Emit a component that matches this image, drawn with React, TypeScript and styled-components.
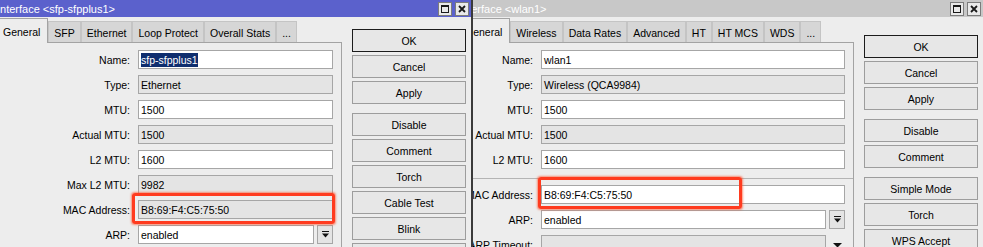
import React from 'react';
import styled, { createGlobalStyle } from 'styled-components';

const GlobalStyle = createGlobalStyle`
  html, body {
    margin: 0;
    padding: 0;
    background: #ededed;
    overflow: hidden;
  }
  body {
    font-family: "Liberation Sans", Arial, sans-serif;
    font-size: 10.5px;
    color: #000;
  }
`;

const Screen = styled.div`
  display: flex;
  width: 983px;
  height: 247px;
  overflow: hidden;
  background: #ededed;
`;

const Clip = styled.div<{ $width: number }>`
  width: ${p => p.$width}px;
  height: 100%;
  flex-shrink: 0;
  overflow: hidden;
`;

const Frame = styled.div<{ $cut: number; $edge?: boolean }>`
  position: relative;
  height: 100%;
  margin-left: -${p => p.$cut}px;
  background: #ededed;
  border-right: ${p => (p.$edge ? '2px solid #3a3a3a' : 'none')};
`;

const TitleBar = styled.div<{ $active?: boolean }>`
  height: 17px;
  display: flex;
  align-items: center;
  padding: 0 2px 0 3px;
  background: ${p => (p.$active ? '#5b61cc' : '#c8c8c8')};
  color: #fff;
  font-size: 11px;
`;

const TitleText = styled.div`
  flex: 1;
  white-space: nowrap;
  overflow: hidden;
`;

const TitleButtons = styled.div`
  display: flex;
  gap: 3px;
`;

const TitleButton = styled.div`
  width: 14px;
  height: 14px;
  box-sizing: border-box;
  border: 1px solid #7c7c7c;
  background: #e9e9e9;
  display: flex;
  align-items: center;
  justify-content: center;
`;

const Body = styled.div`
  display: flex;
  align-items: flex-start;
  padding: 0 5px 0 1px;
`;

const TabArea = styled.div<{ $width: number }>`
  width: ${p => p.$width}px;
  flex-shrink: 0;
  display: flex;
  flex-direction: column;
`;

const TabRow = styled.div`
  height: 26px;
  margin-bottom: -1px;
  display: flex;
  align-items: flex-end;
  position: relative;
  z-index: 1;
`;

const Tab = styled.div<{ $active?: boolean }>`
  box-sizing: border-box;
  height: ${p => (p.$active ? 25 : 21)}px;
  margin-bottom: ${p => (p.$active ? 0 : 1)}px;
  padding: ${p => (p.$active ? '2px 7px 0' : '1px 5px 0')};
  border: 1px solid ${p => (p.$active ? '#a3a3a3' : '#c4c4c4')};
  border-bottom: none;
  background: ${p => (p.$active ? '#ededed' : '#d6d6d6')};
  display: flex;
  align-items: center;
  white-space: nowrap;
`;

const Panel = styled.div`
  height: 220px;
  border: 1px solid #a3a3a3;
  padding: 7px 8px 0 0;
`;

const Form = styled.div`
  display: flex;
  flex-direction: column;
  gap: 6px;
`;

const Row = styled.div<{ $labelWidth: number }>`
  display: grid;
  grid-template-columns: ${p => p.$labelWidth}px 1fr;
  column-gap: 8px;
  align-items: center;
  height: 19px;
`;

const Label = styled.div`
  text-align: right;
  white-space: nowrap;
`;

const Field = styled.div<{ $readOnly?: boolean }>`
  flex: 1;
  min-width: 0;
  box-sizing: border-box;
  height: 19px;
  border: 1px solid #a6a6a6;
  background: ${p => (p.$readOnly ? '#e4e4e4' : '#fff')};
  padding: 0 2px;
  display: flex;
  align-items: center;
  white-space: nowrap;
  overflow: hidden;
`;

const Selected = styled.span`
  background: #0e2d6e;
  color: #fff;
  padding: 1px 0;
`;

const Combo = styled.div`
  display: flex;
  gap: 3px;
`;

const DropButton = styled.div<{ $plain?: boolean }>`
  width: 16px;
  height: 19px;
  flex-shrink: 0;
  box-sizing: border-box;
  border: 1px solid ${p => (p.$plain ? 'transparent' : '#a6a6a6')};
  background: ${p => (p.$plain ? 'transparent' : '#e4e4e4')};
  display: flex;
  align-items: center;
  justify-content: center;
`;

const Separator = styled.div`
  height: 1px;
  margin: 3px -8px 0 0;
  background: #b4b4b4;
`;

const ButtonColumn = styled.div<{ $top: number }>`
  width: 114px;
  flex-shrink: 0;
  margin-left: 10px;
  padding-top: ${p => p.$top}px;
  display: flex;
  flex-direction: column;
  gap: 9px;
`;

const ButtonGroup = styled.div`
  display: flex;
  flex-direction: column;
  gap: 3px;
`;

const Button = styled.div<{ $default?: boolean }>`
  height: 23px;
  box-sizing: border-box;
  border: 1px solid ${p => (p.$default ? '#1c1c1c' : '#9d9d9d')};
  background: #e7e7e7;
  display: flex;
  align-items: center;
  justify-content: center;
  white-space: nowrap;
`;

const Highlight = styled.div`
  position: absolute;
  box-sizing: border-box;
  border: 3px solid #ff3b1f;
  border-radius: 3px;
  box-shadow: 0 0 2px 0.5px rgba(255, 80, 40, 0.6);
  pointer-events: none;
`;

type FieldRow = {
  label: string;
  value?: string;
  readOnly?: boolean;
  selected?: boolean;
  combo?: 'box' | 'plain';
};
type FormRow = FieldRow | { separator: true };

interface WindowProps {
  title: string;
  active?: boolean;
  cut: number;
  width: number;
  edge?: boolean;
  tabs: string[];
  tabAreaWidth: number;
  labelWidth: number;
  rows: FormRow[];
  buttonTop: number;
  buttons: string[][];
  highlight: { left: number; top: number; width: number; height: number };
}

const MaxIcon = () => (
  <svg width="8" height="8" viewBox="0 0 8 8">
    <rect x="0.5" y="0.5" width="7" height="7" fill="none" stroke="#1a1a1a" />
    <rect x="0" y="0" width="8" height="2" fill="#1a1a1a" />
  </svg>
);

const CloseIcon = () => (
  <svg width="8" height="8" viewBox="0 0 8 8">
    <path d="M1 1 L7 7 M7 1 L1 7" stroke="#1a1a1a" strokeWidth="1.8" />
  </svg>
);

const DropIcon = ({ bar }: { bar: boolean }) => (
  <svg width="9" height="7" viewBox="0 0 9 7">
    {bar && <rect x="1" y="0" width="7" height="1" fill="#111" />}
    <polygon points={bar ? '1,2.5 8,2.5 4.5,6.5' : '0,2 9,2 4.5,6.5'} fill="#111" />
  </svg>
);

const InterfaceWindow: React.FC<WindowProps> = props => (
  <Clip $width={props.width}>
    <Frame $cut={props.cut} $edge={props.edge}>
      <TitleBar $active={props.active}>
        <TitleText>{props.title}</TitleText>
        <TitleButtons>
          <TitleButton>
            <MaxIcon />
          </TitleButton>
          <TitleButton>
            <CloseIcon />
          </TitleButton>
        </TitleButtons>
      </TitleBar>
      <Body>
        <TabArea $width={props.tabAreaWidth}>
          <TabRow>
            {props.tabs.map((t, i) => (
              <Tab key={t} $active={i === 0}>
                {t}
              </Tab>
            ))}
          </TabRow>
          <Panel>
            <Form>
              {props.rows.map((r, i) =>
                'separator' in r ? (
                  <Separator key={i} />
                ) : (
                  <Row key={r.label} $labelWidth={props.labelWidth}>
                    <Label>{r.label}:</Label>
                    {r.combo ? (
                      <Combo>
                        <Field $readOnly={r.readOnly}>{r.value}</Field>
                        <DropButton $plain={r.combo === 'plain'}>
                          <DropIcon bar={r.combo === 'box'} />
                        </DropButton>
                      </Combo>
                    ) : (
                      <Field $readOnly={r.readOnly}>
                        {r.selected ? <Selected>{r.value}</Selected> : r.value}
                      </Field>
                    )}
                  </Row>
                )
              )}
            </Form>
          </Panel>
        </TabArea>
        <ButtonColumn $top={props.buttonTop}>
          {props.buttons.map((group, gi) => (
            <ButtonGroup key={gi}>
              {group.map((b, bi) => (
                <Button key={bi} $default={b === 'OK'}>
                  {b}
                </Button>
              ))}
            </ButtonGroup>
          ))}
        </ButtonColumn>
      </Body>
      <Highlight style={props.highlight} />
    </Frame>
  </Clip>
);

const sfpRows: FormRow[] = [
  { label: 'Name', value: 'sfp-sfpplus1', selected: true },
  { label: 'Type', value: 'Ethernet', readOnly: true },
  { label: 'MTU', value: '1500' },
  { label: 'Actual MTU', value: '1500', readOnly: true },
  { label: 'L2 MTU', value: '1600' },
  { label: 'Max L2 MTU', value: '9982', readOnly: true },
  { label: 'MAC Address', value: 'B8:69:F4:C5:75:50', readOnly: true },
  { label: 'ARP', value: 'enabled', combo: 'box' },
];

const wlanRows: FormRow[] = [
  { label: 'Name', value: 'wlan1' },
  { label: 'Type', value: 'Wireless (QCA9984)', readOnly: true },
  { label: 'MTU', value: '1500' },
  { label: 'Actual MTU', value: '1500', readOnly: true },
  { label: 'L2 MTU', value: '1600' },
  { separator: true },
  { label: 'MAC Address', value: 'B8:69:F4:C5:75:50' },
  { label: 'ARP', value: 'enabled', combo: 'box' },
  { label: 'ARP Timeout', value: '', readOnly: true, combo: 'plain' },
];

const App: React.FC = () => (
  <>
    <GlobalStyle />
    <Screen>
      <InterfaceWindow
        title="Interface <sfp-sfpplus1>"
        active
        edge
        cut={6}
        width={473}
        tabs={['General', 'SFP', 'Ethernet', 'Loop Protect', 'Overall Stats', '...']}
        tabAreaWidth={347}
        labelWidth={134}
        rows={sfpRows}
        buttonTop={12}
        buttons={[
          ['OK', 'Cancel', 'Apply'],
          ['Disable', 'Comment', 'Torch', 'Cable Test', 'Blink', ''],
        ]}
        highlight={{ left: 138, top: 193, width: 203, height: 31 }}
      />
      <InterfaceWindow
        title="Interface <wlan1>"
        cut={17}
        width={510}
        tabs={['General', 'Wireless', 'Data Rates', 'Advanced', 'HT', 'HT MCS', 'WDS', '...']}
        tabAreaWidth={397}
        labelWidth={75}
        rows={wlanRows}
        buttonTop={18}
        buttons={[
          ['OK', 'Cancel', 'Apply'],
          ['Disable', 'Comment'],
          ['Simple Mode', 'Torch', 'WPS Accept'],
        ]}
        highlight={{ left: 82, top: 177, width: 204, height: 32 }}
      />
    </Screen>
  </>
);

export default App;
